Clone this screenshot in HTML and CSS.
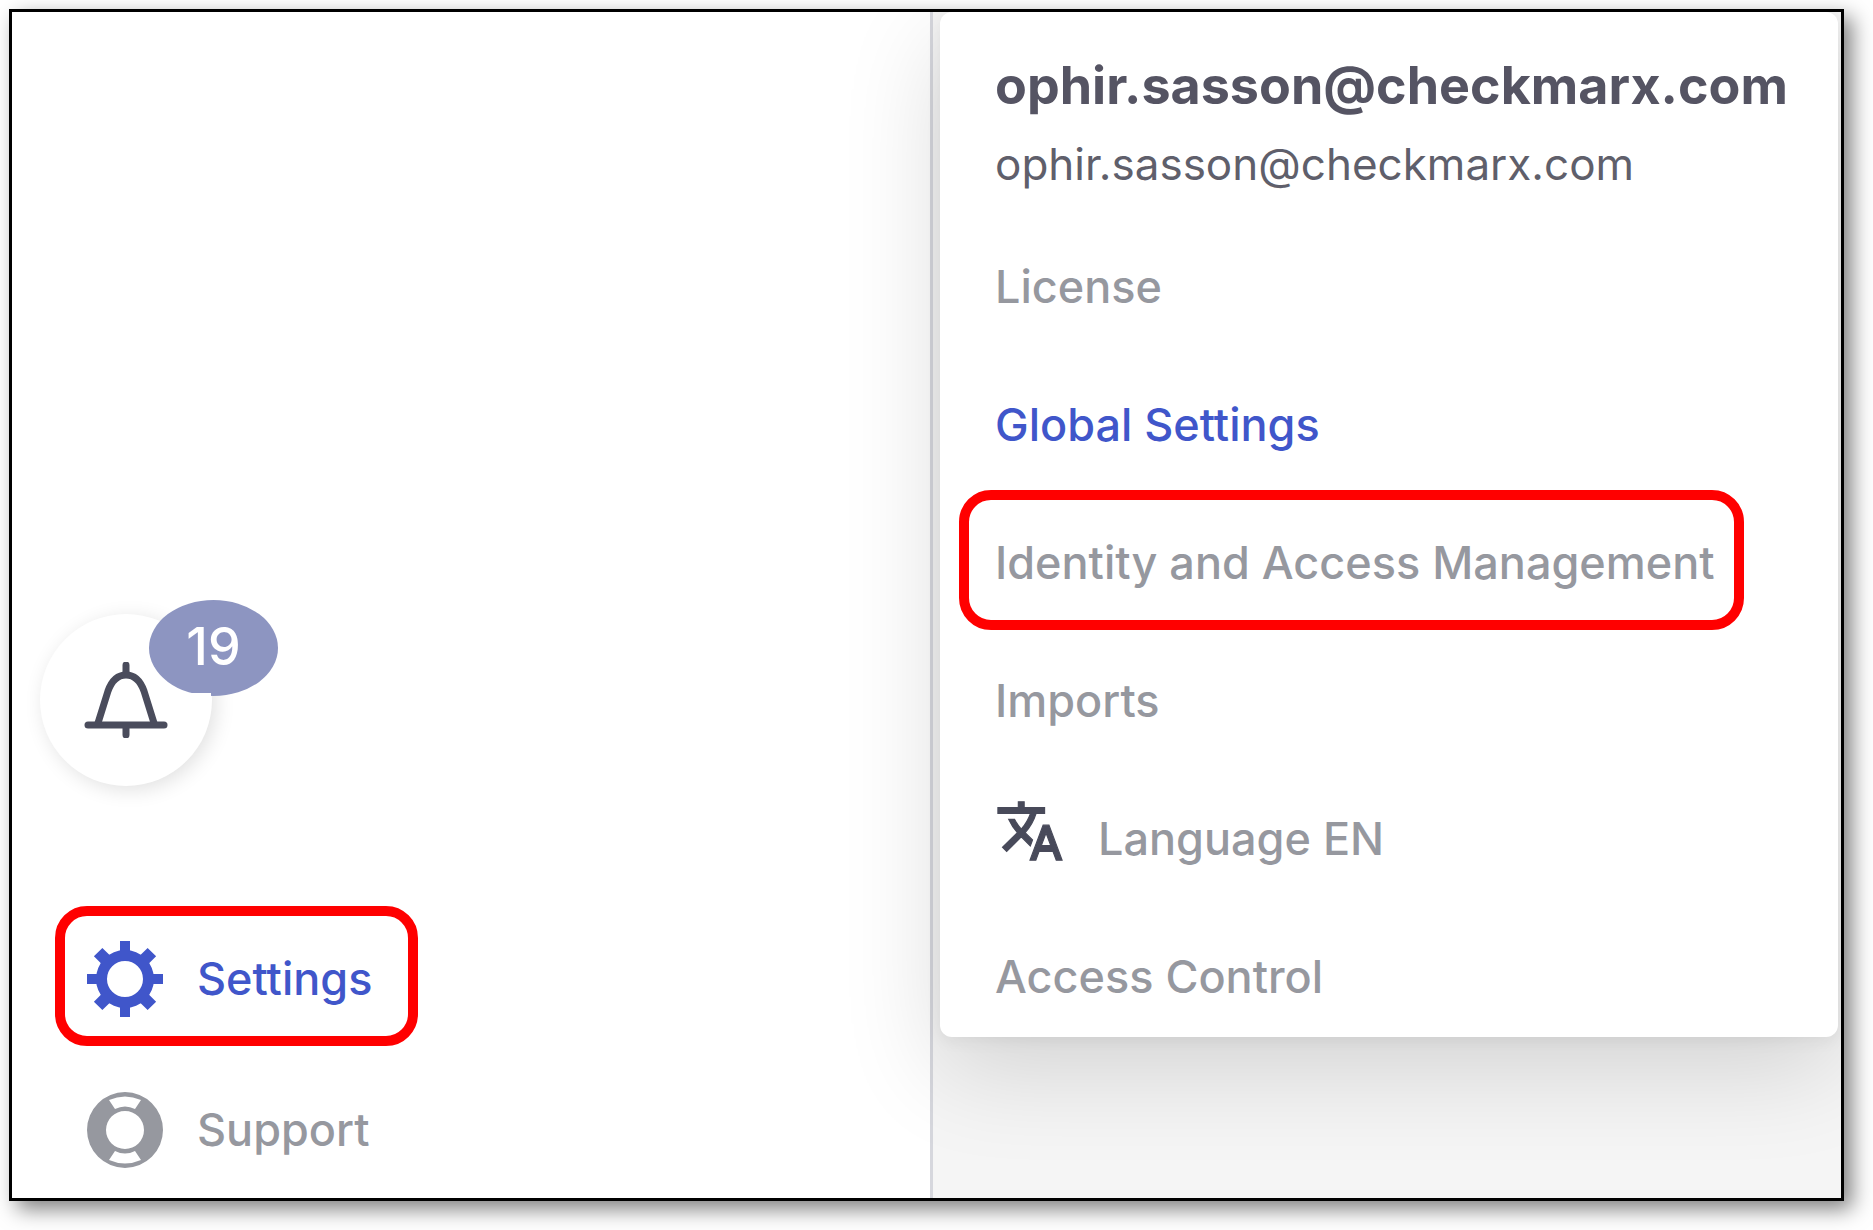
FILE: index.html
```html
<!DOCTYPE html>
<html lang="en">
<head>
<meta charset="utf-8">
<meta name="viewport" content="width=device-width, initial-scale=1">
<title>Settings</title>
<link rel="stylesheet" href="styles.css">
</head>
<body>
<div class="window">
  <nav class="sidebar" aria-label="Main">
    <button class="bell" type="button" aria-label="Notifications">
      <svg class="bell-icon" viewBox="0 0 84 76" aria-hidden="true">
        <g fill="none" stroke="#4a4c5c" stroke-width="7">
          <path d="M42 3v9M42 66v7" stroke-linecap="round"/>
          <path d="M4 63h76" stroke-linecap="round"/>
          <path d="M14 61L24 29C28 18 34 13 42 13S56 18 60 29L70 61"/>
        </g>
      </svg>
      <span class="badge">19</span>
    </button>
    <ul class="links">
      <li>
        <a class="link active ringed" href="#settings">
          <svg class="link-icon" viewBox="0 0 76 76" aria-hidden="true">
            <g fill="currentColor">
              <path fill-rule="evenodd" d="M38 9a29 29 0 1 1 0 58a29 29 0 1 1 0-58zM38 20a18 18 0 1 0 0 36a18 18 0 1 0 0-36z"/>
              <path d="M33 0h10v12h-10zM33 64h10v12h-10zM0 33h12v10h-12zM64 33h12v10h-12z"/>
              <path transform="rotate(45 38 38)" d="M32 0h12v12h-12zM32 64h12v12h-12zM0 32h12v12h-12zM64 32h12v12h-12z"/>
            </g>
          </svg>
          Settings
        </a>
      </li>
      <li>
        <a class="link" href="#support">
          <svg class="link-icon" viewBox="0 0 76 76" aria-hidden="true">
            <path fill="currentColor" fill-rule="evenodd" d="M38 0a38 38 0 1 1 0 76a38 38 0 1 1 0-76zM38 19a19 19 0 1 0 0 38a19 19 0 1 0 0-38zM22 8Q38 1 54 8L48 17Q38 12 28 17zM22 68Q38 75 54 68L48 59Q38 64 28 59z"/>
          </svg>
          Support
        </a>
      </li>
    </ul>
  </nav>
  <main class="content">
    <section class="panel" aria-label="Account settings">
      <h1 class="name">ophir.sasson@checkmarx.com</h1>
      <p class="email">ophir.sasson@checkmarx.com</p>
      <ul class="menu">
        <li><a class="item" href="#license">License</a></li>
        <li><a class="item active" href="#global-settings">Global Settings</a></li>
        <li><a class="item ringed" href="#iam">Identity and Access Management</a></li>
        <li><a class="item" href="#imports">Imports</a></li>
        <li>
          <button class="item" type="button">
            <svg class="language-icon" viewBox="0 0 24 24" aria-hidden="true">
              <path fill="#484a5a" stroke="#484a5a" stroke-width=".4" d="M12.87 15.07l-2.54-2.51.03-.03c1.74-1.94 2.98-4.17 3.71-6.53H17V4h-7V2H8v2H1v1.99h11.17C11.5 7.92 10.44 9.75 9 11.35 8.07 10.32 7.3 9.19 6.69 8h-2c.73 1.63 1.73 3.17 2.98 4.56l-5.09 5.02L4 19l5-5 3.11 3.11.76-2.04zM18.5 10h-2L12 22h2l1.12-3h4.75L21 22h2l-4.5-12zm-2.62 7l1.62-4.33L19.12 17h-3.24z"/>
            </svg>
            Language EN
          </button>
        </li>
        <li><a class="item" href="#access-control">Access Control</a></li>
      </ul>
    </section>
  </main>
</div>
</body>
</html>
```
FILE: styles.css
```css
* {
  box-sizing: border-box;
}

body {
  margin: 0;
  min-height: 100vh;
  padding: 9px 29px 29px 9px;
  display: grid;
  background: #fff;
  color: #96989f;
  font: 500 45px/56px Inter, "Liberation Sans", sans-serif;
}

ul {
  margin: 0;
  padding: 0;
  list-style: none;
}

a {
  color: inherit;
  text-decoration: none;
}

button {
  border: 0;
  background: none;
  color: inherit;
  font: inherit;
  cursor: pointer;
}

.window {
  display: grid;
  grid-template-columns: 921fr 908fr;
  overflow: hidden;
  border: 3px solid #000;
  background: #fff;
  box-shadow: 8px 8px 20px rgba(0, 0, 0, 0.5);
}

.sidebar {
  display: flex;
  flex-direction: column;
  justify-content: flex-end;
  align-items: flex-start;
  padding: 28px 28px 1px;
  border-right: 3px solid #d6d7dd;
}

.bell {
  position: relative;
  display: grid;
  place-items: center;
  width: 172px;
  height: 172px;
  margin-bottom: 120px;
  padding: 0;
  border-radius: 50%;
  background: #fff;
  box-shadow: 4px 4px 20px rgba(0, 0, 0, 0.12);
}

.bell-icon {
  width: 84px;
  height: 76px;
}

.badge {
  position: absolute;
  top: -14px;
  left: 109px;
  width: 129px;
  height: 96px;
  border-radius: 50%;
  background: #8d95c1;
  clip-path: polygon(0 0, 100% 0, 100% 100%, 62px 100%, 62px 93px, 0 93px);
  color: #fff;
  font-size: 52px;
  line-height: 94px;
  text-align: center;
}

.links {
  display: grid;
  gap: 11px;
  margin-left: 15px;
}

.link,
.item {
  display: flex;
  align-items: center;
  height: 140px;
  border: 10px solid transparent;
  border-radius: 32px;
  white-space: nowrap;
}

.link {
  gap: 34px;
  padding: 5px 36px 0 22px;
}

.link-icon {
  width: 76px;
  height: 76px;
}

.active {
  color: #4056ca;
}

.ringed {
  border-color: #f00;
}

.content {
  padding: 0 3px 0 7px;
  background: #f5f5f5;
}

.panel {
  display: flow-root;
  padding: 44px 19px 0;
  border-radius: 12px;
  background: #fff;
  box-shadow: 0 32px 100px rgba(0, 0, 0, 0.14), 0 4px 16px rgba(0, 0, 0, 0.06);
}

.name,
.email {
  margin: 0 0 0 36px;
}

.name {
  color: #555463;
  font-size: 52px;
  font-weight: 700;
  line-height: 60px;
}

.email {
  margin-top: 20px;
  color: #5f5f6b;
  font-size: 44px;
  font-weight: 400;
}

/* The last row's box runs past the panel's lower edge. */
.menu {
  margin: 23px 0 -6px;
}

.menu li {
  display: flex;
  height: 138px;
  align-items: center;
}

.item {
  gap: 33px;
  padding: 6px 19px 0 26px;
}

.language-icon {
  width: 70px;
  height: 70px;
  margin-bottom: 16px;
}
```
